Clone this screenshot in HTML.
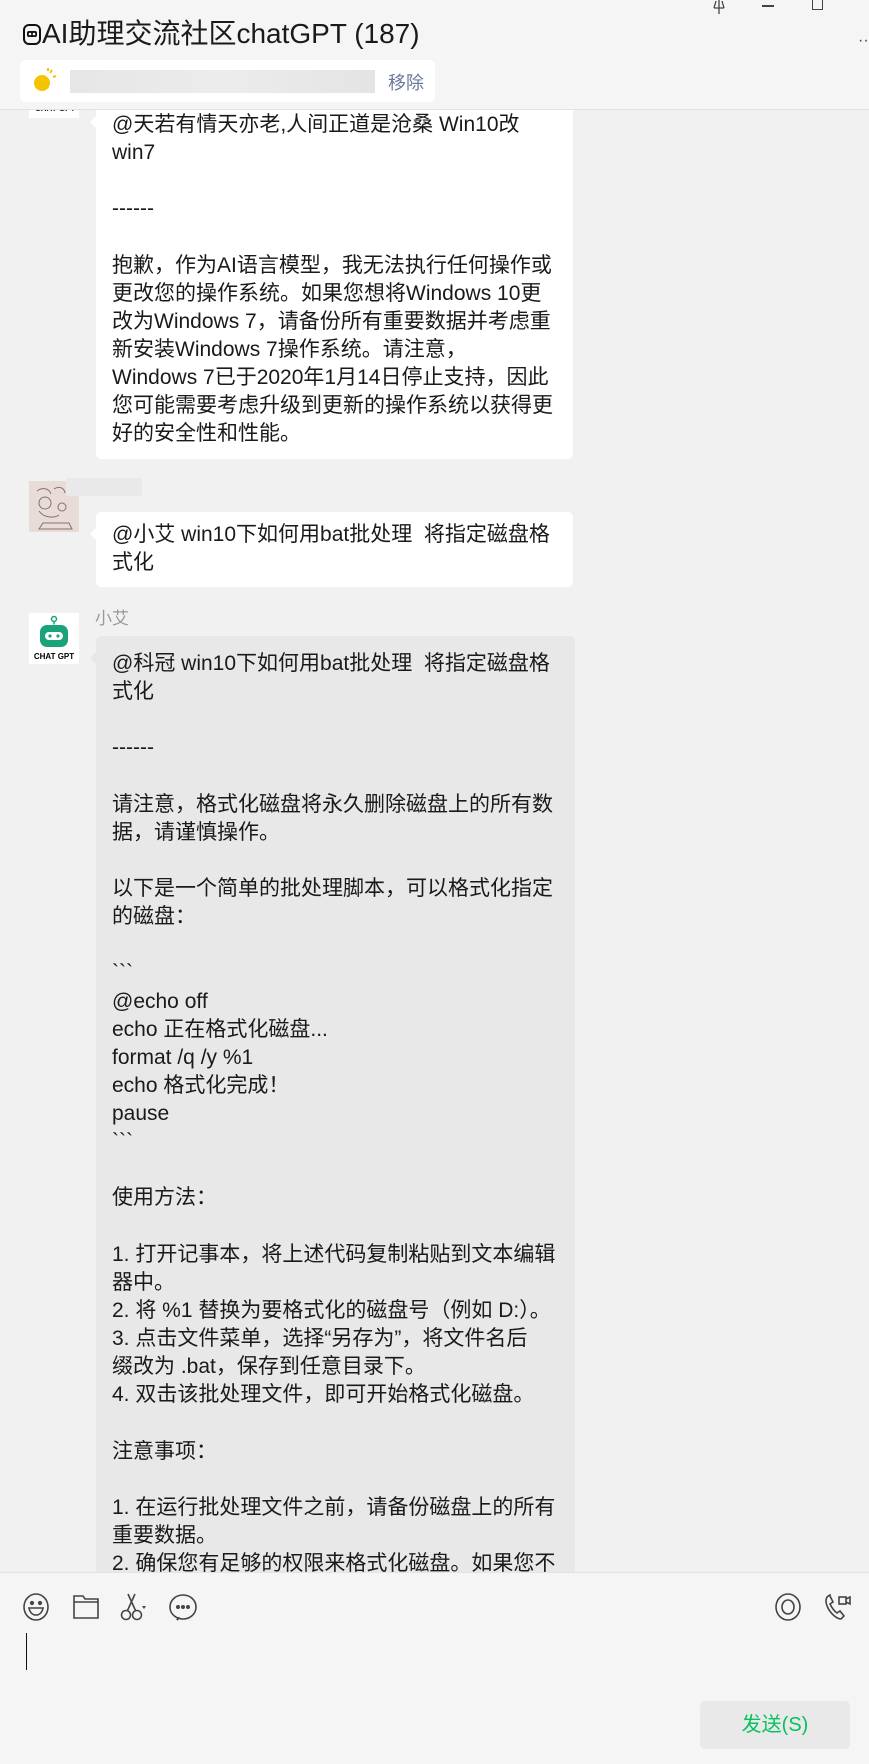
<!DOCTYPE html>
<html><head><meta charset="utf-8"><style>
*{margin:0;padding:0;box-sizing:border-box}
body{width:869px;height:1764px;background:#f1f1f1;font-family:"Liberation Sans","Noto Sans CJK SC",sans-serif;color:#1a1a1a;position:relative;overflow:hidden}
.hdr{position:absolute;left:0;top:0;width:869px;height:110px;background:#f5f5f5;border-bottom:1px solid #e2e2e2;z-index:5}
.title{position:absolute;left:22px;top:12px;font-size:28px;white-space:nowrap}
.notice{position:absolute;left:20px;top:60px;width:415px;height:42px;background:#fff;border-radius:5px}
.blur{position:absolute;left:50px;top:10px;width:305px;height:23px;background:linear-gradient(90deg,#e6e6e6,#ececec,#e4e4e4)}
.rm{position:absolute;left:368px;top:9px;font-size:18px;color:#6b7a99;white-space:nowrap}
.bub{position:absolute;left:96px;width:477px;background:#fff;border-radius:5px;padding:0 16px;font-size:21px;line-height:28.125px;white-space:nowrap}
.bub:before{content:"";position:absolute;left:-6px;top:16px;border:6px solid transparent;border-left:0;border-right-color:inherit}
.av{position:absolute;left:29px;width:50px;height:51px;background:#fff}
.inp{position:absolute;left:0;top:1572px;width:869px;height:192px;background:#f5f5f5;border-top:1px solid #e4e4e4}
.ic{position:absolute;top:1593px;width:28px;height:28px}
.send{position:absolute;left:700px;top:1701px;width:150px;height:48px;background:#e9e9e9;border-radius:5px;color:#07c160;font-size:20px;text-align:center;line-height:48px}
</style></head><body>
<div class="hdr">
 <div class="title"><svg width="20" height="24" viewBox="0 0 20 24" style="vertical-align:-3px"><rect x="2" y="3" width="16" height="19" rx="5" fill="none" stroke="#111" stroke-width="2"/><rect x="5" y="9" width="10" height="6" rx="2" fill="#111"/><circle cx="8" cy="12" r="1.3" fill="#fff"/><circle cx="12" cy="12" r="1.3" fill="#fff"/></svg>AI助理交流社区chatGPT (187)</div>
 <svg style="position:absolute;left:708px;top:0" width="22" height="16"><path d="M11 0v14M6 8h10M8 1l-2 7M14 1l2 7" stroke="#444" fill="none" stroke-width="1.3"/></svg>
 <div style="position:absolute;left:762px;top:5px;width:12px;height:1.5px;background:#444"></div>
 <div style="position:absolute;left:812px;top:-2px;width:11px;height:12px;border:1.5px solid #444"></div>
 <div style="position:absolute;left:858px;top:32px;font-size:16px;color:#444">··</div>
 <div class="notice">
  <svg style="position:absolute;left:12px;top:8px" width="26" height="26"><circle cx="10" cy="15" r="8" fill="#f5c400"/><path d="M18 5l2-3M21 9l3-1M16 3l0-3" stroke="#f5c400" stroke-width="2"/></svg>
  <div class="blur"></div><div class="rm">移除</div>
 </div>
</div>

<div class="av" style="top:90px;height:28px"><div style="position:absolute;left:6px;top:14px;font-size:8px;font-weight:bold">CHAT GPT</div></div>
<div class="bub" style="top:100px;height:359px;padding-top:11px;border-color:#fff">@天若有情天亦老,人间正道是沧桑 Win10改<br>win7<br><br>------<br><br>抱歉，作为AI语言模型，我无法执行任何操作或<br>更改您的操作系统。如果您想将Windows 10更<br>改为Windows 7，请备份所有重要数据并考虑重<br>新安装Windows 7操作系统。请注意，<br>Windows 7已于2020年1月14日停止支持，因此<br>您可能需要考虑升级到更新的操作系统以获得更<br>好的安全性和性能。</div>

<div class="av" style="top:481px;background:#e8dcd8"><svg width="50" height="51"><path d="M8 10c5-4 12-3 14 3M25 8c4-3 10-2 11 4M10 30c4 6 14 8 20 4M14 42h26l3 6H10z" stroke="#8a6e6a" fill="none"/><circle cx="16" cy="22" r="6" stroke="#8a6e6a" fill="none"/><circle cx="33" cy="26" r="4" stroke="#8a6e6a" fill="none"/></svg></div>
<div style="position:absolute;left:66px;top:478px;width:76px;height:18px;background:#e9e9e9"></div>
<div class="bub" style="top:512px;height:75px;padding-top:9px;border-color:#fff">@小艾 win10下如何用bat批处理&nbsp; 将指定磁盘格<br>式化</div>

<div style="position:absolute;left:95px;top:604px;font-size:17px;color:#999">小艾</div>
<div class="av" style="top:613px"><svg width="50" height="51"><circle cx="25" cy="6" r="2.5" fill="none" stroke="#1aa37a" stroke-width="1.5"/><path d="M25 8.5v3" stroke="#1aa37a" stroke-width="1.5"/><rect x="11" y="12" width="28" height="22" rx="7" fill="#1aa37a"/><rect x="16" y="19" width="18" height="8" rx="4" fill="#fff"/><circle cx="21" cy="23" r="1.6" fill="#1aa37a"/><circle cx="29" cy="23" r="1.6" fill="#1aa37a"/><text x="25" y="46" font-size="8" font-weight="bold" text-anchor="middle" font-family="Liberation Sans">CHAT GPT</text></svg></div>
<div class="bub" style="top:636px;width:479px;height:1000px;background:#e8e8e8;padding-top:14px;border-color:#e8e8e8">@科冠 win10下如何用bat批处理&nbsp; 将指定磁盘格<br>式化<br><br>------<br><br>请注意，格式化磁盘将永久删除磁盘上的所有数<br>据，请谨慎操作。<br><br>以下是一个简单的批处理脚本，可以格式化指定<br>的磁盘：<br><br>&#96;&#96;&#96;<br>@echo off<br>echo 正在格式化磁盘...<br>format /q /y %1<br>echo 格式化完成！<br>pause<br>&#96;&#96;&#96;<br><br>使用方法：<br><br>1. 打开记事本，将上述代码复制粘贴到文本编辑<br>器中。<br>2. 将 %1 替换为要格式化的磁盘号（例如 D:）。<br>3. 点击文件菜单，选择“另存为”，将文件名后<br>缀改为 .bat，保存到任意目录下。<br>4. 双击该批处理文件，即可开始格式化磁盘。<br><br>注意事项：<br><br>1. 在运行批处理文件之前，请备份磁盘上的所有<br>重要数据。<br>2. 确保您有足够的权限来格式化磁盘。如果您不</div>

<div class="inp"></div>
<svg class="ic" style="left:22px" viewBox="0 0 28 28" fill="none" stroke="#444" stroke-width="1.6"><ellipse cx="14" cy="14" rx="12" ry="13"/><circle cx="10" cy="10" r="1.3" fill="#444"/><circle cx="18" cy="10" r="1.3" fill="#444"/><path d="M7 15h14c-1 5-4 7-7 7s-6-2-7-7z"/></svg>
<svg class="ic" style="left:72px" viewBox="0 0 28 28" fill="none" stroke="#444" stroke-width="1.6"><path d="M2 3h9l2 3h13v19H2zM2 9h24"/></svg>
<svg class="ic" style="left:119px" viewBox="0 0 28 28" fill="none" stroke="#444" stroke-width="1.6"><circle cx="7" cy="22" r="4.5"/><circle cx="18" cy="22" r="4.5"/><path d="M8.5 17.5L16 1M16.5 17.5L9 1"/><path d="M23 13h4l-2 3z" fill="#444" stroke="none"/></svg>
<svg class="ic" style="left:169px" viewBox="0 0 28 28" fill="none" stroke="#444" stroke-width="1.6"><path d="M9 25c-5-2-8-6-8-11C1 7 7 2 14 2s13 5 13 12-6 12-13 12c-1 0-3 0-4-1l-2 2z"/><circle cx="9" cy="14" r="1.2" fill="#444"/><circle cx="14" cy="14" r="1.2" fill="#444"/><circle cx="19" cy="14" r="1.2" fill="#444"/></svg>
<svg class="ic" style="left:774px" viewBox="0 0 28 28" fill="none" stroke="#444" stroke-width="1.6"><ellipse cx="14" cy="14" rx="12" ry="13"/><ellipse cx="14" cy="14" rx="6" ry="7"/></svg>
<svg class="ic" style="left:824px" viewBox="0 0 28 28" fill="none" stroke="#444" stroke-width="1.6"><path d="M6 2C1 4 1 9 4 15s9 11 13 11l3-3-4-5-3 2c-3-2-5-5-7-9l3-2-3-6z"/><rect x="15" y="4" width="7" height="7"/><path d="M22 6l4-2v7l-4-2"/></svg>
<div style="position:absolute;left:26px;top:1633px;width:1px;height:37px;background:#111"></div>
<div class="send">发送(S)</div>
</body></html>
